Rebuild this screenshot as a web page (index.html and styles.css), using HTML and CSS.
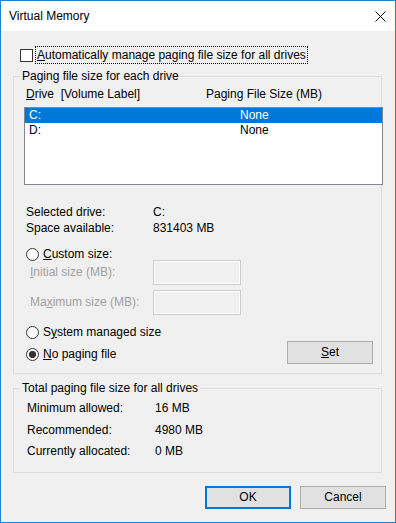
FILE: index.html
```html
<!DOCTYPE html>
<html lang="en">
<head>
<meta charset="utf-8">
<title>Virtual Memory</title>
<link rel="stylesheet" href="styles.css">
</head>
<body>
<div class="window">
  <div class="titlebar">
    <span class="title">Virtual Memory</span>
    <svg class="close" width="11" height="11" viewBox="0 0 11 11" aria-label="Close">
      <path d="M0.5 0.5L10.5 10.5M10.5 0.5L0.5 10.5" stroke="#000" stroke-width="1" fill="none"/>
    </svg>
  </div>
  <div class="content">
    <div class="check-row">
      <span class="checkbox"></span>
      <span class="focus"><u>A</u>utomatically manage paging file size for all drives</span>
    </div>

    <fieldset class="group g1">
      <legend>Paging file size for each drive</legend>
      <div class="list-head"><span class="col1"><u>D</u>rive&nbsp;&nbsp;[Volume Label]</span><span>Paging File Size (MB)</span></div>
      <div class="listbox">
        <div class="item selected"><span class="col1">C:</span><span>None</span></div>
        <div class="item"><span class="col1">D:</span><span>None</span></div>
      </div>
      <div class="info">
        <div class="info-row"><span class="info-label">Selected drive:</span><span>C:</span></div>
        <div class="info-row"><span class="info-label">Space available:</span><span>831403 MB</span></div>
      </div>
      <div class="radio-row r-custom"><span class="radio"></span><span class="radio-label"><u>C</u>ustom size:</span></div>
      <div class="field-row f-initial"><span class="field-label"><u>I</u>nitial size (MB):</span><span class="edit"></span></div>
      <div class="field-row f-max"><span class="field-label">Ma<u>x</u>imum size (MB):</span><span class="edit"></span></div>
      <div class="radio-row r-system"><span class="radio"></span><span class="radio-label">S<u>y</u>stem managed size</span></div>
      <div class="last-row">
        <div class="radio-row r-none"><span class="radio checked"></span><span class="radio-label"><u>N</u>o paging file</span></div>
        <button class="btn set"><u>S</u>et</button>
      </div>
    </fieldset>

    <fieldset class="group g2">
      <legend>Total paging file size for all drives</legend>
      <div class="stat-row"><span class="stat-label">Minimum allowed:</span><span>16 MB</span></div>
      <div class="stat-row"><span class="stat-label">Recommended:</span><span>4980 MB</span></div>
      <div class="stat-row"><span class="stat-label">Currently allocated:</span><span>0 MB</span></div>
    </fieldset>

    <div class="buttons">
      <button class="btn default">OK</button>
      <button class="btn">Cancel</button>
    </div>
  </div>
</div>
</body>
</html>
```

FILE: styles.css
```css
html, body {
  margin: 0;
  padding: 0;
  background: #f0f0f0;
}

body {
  font-family: "Liberation Sans", Arial, sans-serif;
  font-size: 12px;
  color: #000;
}

.window {
  width: 396px;
  height: 523px;
  box-sizing: border-box;
  border: 1px solid #1883d7;
  background: #f0f0f0;
  display: flex;
  flex-direction: column;
}

.titlebar {
  height: 30px;
  flex: none;
  background: #fff;
  display: flex;
  align-items: center;
  padding: 0 9px 0 8px;
}

.title {
  flex: 1;
  line-height: 15px;
}

.close {
  display: block;
}

.content {
  padding: 0 9px 0 12px;
}

.check-row {
  display: flex;
  margin: 15px 0 0 7px;
  height: 18px;
}

.checkbox {
  width: 13px;
  height: 13px;
  box-sizing: border-box;
  border: 1px solid #333;
  background: #fff;
  margin: 3px 2px 0 0;
  flex: none;
}

.focus {
  border: 1px dotted #000;
  line-height: 16px;
  padding: 0 1px;
}

.group {
  margin: 0 4px 0 0;
  padding: 3px 0 9px 6px;
  border: 1px solid #dcdcdc;
  min-width: 0;
}

.group legend {
  padding: 0 2px;
  line-height: 15px;
}

.g1 {
  margin-top: 5px;
}

.list-head {
  display: flex;
  padding-left: 6px;
  line-height: 15px;
}

.list-head .col1 {
  width: 180px;
}

.listbox {
  margin: 5px -2px 0 4px;
  height: 78px;
  box-sizing: border-box;
  border: 1px solid #828790;
  background: #fff;
}

.item {
  display: flex;
  line-height: 15px;
  padding-left: 4px;
}

.item .col1 {
  width: 211px;
}

.item.selected {
  background: #0078d7;
  color: #fff;
}

.info {
  margin-top: 19px;
  padding-left: 6px;
}

.info-row {
  display: flex;
  line-height: 16px;
}

.info-label {
  width: 127px;
}

.radio-row {
  display: flex;
  align-items: center;
  margin-left: 6px;
  height: 13px;
}

.radio {
  width: 13px;
  height: 13px;
  box-sizing: border-box;
  border: 1px solid #333;
  border-radius: 50%;
  background: #fff;
  margin-right: 4px;
  flex: none;
}

.radio.checked {
  background: radial-gradient(circle, #333 0 3.3px, #fff 3.9px);
}

.radio-label {
  line-height: 13px;
}

.r-custom {
  margin-top: 12px;
}

.field-row {
  display: flex;
  align-items: center;
  padding-left: 10px;
  height: 25px;
  color: #a0a0a0;
}

.f-initial {
  margin-top: -1px;
}

.f-max {
  margin-top: 5px;
}

.field-label {
  width: 123px;
  line-height: 15px;
}

.edit {
  width: 88px;
  height: 25px;
  box-sizing: border-box;
  border: 1px solid #cccccc;
  box-shadow: inset 0 0 0 1px #fff;
  background: #f0f0f0;
}

.r-system {
  margin-top: 11px;
}

.last-row {
  display: flex;
  align-items: center;
  margin-top: 2px;
  height: 23px;
}

.r-none {
  margin-top: 3px;
}

.btn {
  width: 86px;
  height: 23px;
  box-sizing: border-box;
  border: 1px solid #adadad;
  background: #e1e1e1;
  font: inherit;
  color: #000;
  padding: 0;
  line-height: 15px;
  flex: none;
}

.btn.default {
  border: 2px solid #0078d7;
}

.set {
  margin-left: auto;
  margin-right: 8px;
}

.g2 {
  margin-top: 7px;
  padding: 2px 0 9.5px 6px;
}

.stat-row {
  display: flex;
  line-height: 21.5px;
  padding-left: 7px;
}

.stat-label {
  width: 128px;
}

.buttons {
  display: flex;
  justify-content: flex-end;
  gap: 9px;
  margin-top: 13px;
}
```
